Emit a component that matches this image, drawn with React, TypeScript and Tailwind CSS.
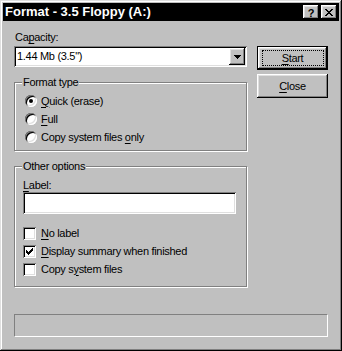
import React from "react";

const raised =
  "shadow-[inset_-1px_-1px_#000,inset_1px_1px_#fff,inset_-2px_-2px_#808080,inset_2px_2px_#dfdfdf]";
const sunken =
  "shadow-[inset_1px_1px_#808080,inset_-1px_-1px_#fff,inset_2px_2px_#000,inset_-2px_-2px_#dfdfdf]";

function U({ children }: { children: React.ReactNode }) {
  return <span className="underline underline-offset-[2px] decoration-1">{children}</span>;
}

function Radio({ checked, children }: { checked?: boolean; children: React.ReactNode }) {
  return (
    <div className="h-[18px] flex items-center">
      <div className={`w-[12px] h-[12px] rounded-full bg-white flex items-center justify-center ${sunken}`}>
        {checked && <div className="w-[4px] h-[4px] rounded-full bg-black" />}
      </div>
      <div className="ml-[4px]">{children}</div>
    </div>
  );
}

function Check({ checked, children }: { checked?: boolean; children: React.ReactNode }) {
  return (
    <div className="h-[18px] flex items-center">
      <div className={`w-[13px] h-[13px] bg-white flex items-center justify-center ${sunken}`}>
        {checked && (
          <svg width="7" height="7" viewBox="0 0 7 7" shapeRendering="crispEdges">
            <path d="M0 2h1v3h-1zM1 3h1v3h-1zM2 4h1v3h-1zM3 3h1v3h-1zM4 2h1v3h-1zM5 1h1v3h-1zM6 0h1v3h-1z" fill="#000" />
          </svg>
        )}
      </div>
      <div className="ml-[5px]">{children}</div>
    </div>
  );
}

function Group({ title, className, children }: { title: string; className: string; children: React.ReactNode }) {
  return (
    <div
      className={`relative border border-[#808080] shadow-[inset_1px_1px_#fff,1px_1px_#fff] ${className}`}
    >
      <div className="absolute top-[-7px] left-[7px] px-[1px] bg-[#c0c0c0] leading-[13px]">{title}</div>
      {children}
    </div>
  );
}

export default function App() {
  return (
    <div
      className={`w-[342px] h-[351px] bg-[#c0c0c0] p-[3px] flex flex-col text-black text-[11px] leading-[13px] tracking-[-0.3px] font-['Liberation_Sans',Arial,sans-serif] shadow-[inset_-1px_-1px_#000,inset_1px_1px_#dfdfdf,inset_-2px_-2px_#808080,inset_2px_2px_#fff]`}
    >
      {/* Title bar */}
      <div className="h-[18px] bg-black flex items-center pl-[2px] pr-[2px]">
        <div className="text-white font-bold text-[13px] leading-[16px] tracking-[0px] ml-[0px]">
          Format - 3.5 Floppy (A:)
        </div>
        <div className="ml-auto flex">
          <div className={`w-[16px] h-[14px] bg-[#c0c0c0] flex items-center justify-center ${raised}`}>
            <span className="font-bold text-[11px] leading-[10px] mt-[1px] tracking-[0px]">?</span>
          </div>
          <div className={`w-[16px] h-[14px] ml-[2px] bg-[#c0c0c0] flex items-center justify-center ${raised}`}>
            <svg width="8" height="7" viewBox="0 0 8 7" shapeRendering="crispEdges">
              <path
                d="M0 0h2v1h-2zM6 0h2v1h-2zM1 1h2v1h-2zM5 1h2v1h-2zM2 2h4v1h-4zM3 3h2v1h-2zM2 4h4v1h-4zM1 5h2v1h-2zM5 5h2v1h-2zM0 6h2v1h-2zM6 6h2v1h-2z"
                fill="#000"
              />
            </svg>
          </div>
        </div>
      </div>

      {/* Body */}
      <div className="flex pl-[11px] pt-[10px]">
        <div className="w-[233px] flex flex-col">
          <div className="h-[13px] pl-[1px]">
            Ca<U>p</U>acity:
          </div>
          <div className={`mt-[2px] h-[21px] bg-white flex items-center ${sunken} pl-[3px] relative`}>
            <span>1.44 Mb (3.5")</span>
            <div
              className={`absolute right-[2px] top-[2px] w-[16px] h-[17px] bg-[#c0c0c0] flex items-center justify-center ${raised}`}
            >
              <svg width="7" height="4" viewBox="0 0 7 4" shapeRendering="crispEdges">
                <path d="M0 0h7v1h-7zM1 1h5v1h-5zM2 2h3v1h-3zM3 3h1v1h-1z" fill="#000" />
              </svg>
            </div>
          </div>

          <Group title="Format type" className="mt-[15px] h-[69px] pt-[9px] pl-[10px]">
            <Radio checked>
              <U>Q</U>uick (erase)
            </Radio>
            <Radio>
              <U>F</U>ull
            </Radio>
            <Radio>
              Copy system files <U>o</U>nly
            </Radio>
          </Group>

          <Group title="Other options" className="mt-[15px] h-[121px] pt-[12px] pl-[8px]">
            <div className="h-[13px]">
              <U>L</U>abel:
            </div>
            <div className={`w-[213px] h-[22px] bg-white ${sunken}`} />
            <div className="mt-[10px]">
              <Check>
                <U>N</U>o label
              </Check>
              <Check checked>
                <U>D</U>isplay summary when finished
              </Check>
              <Check>
                Copy s<U>y</U>stem files
              </Check>
            </div>
          </Group>
        </div>

        <div className="ml-[10px] w-[71px] flex flex-col pt-[15px]">
          <div
            className={`h-[24px] bg-[#c0c0c0] border border-black flex items-center justify-center shadow-[inset_-1px_-1px_#000,inset_1px_1px_#fff,inset_-2px_-2px_#808080,inset_2px_2px_#dfdfdf]`}
          >
            <div className="w-[62px] h-[16px] border border-dotted border-black flex items-center justify-center">
              <span>
                <U>S</U>tart
              </span>
            </div>
          </div>
          <div className={`mt-[4px] h-[24px] bg-[#c0c0c0] flex items-center justify-center ${raised}`}>
            <span>
              <U>C</U>lose
            </span>
          </div>
        </div>
      </div>

      {/* Progress */}
      <div className="ml-[11px] mt-[27px] w-[314px] h-[23px] border border-[#808080] border-b-white border-r-white" />
    </div>
  );
}
